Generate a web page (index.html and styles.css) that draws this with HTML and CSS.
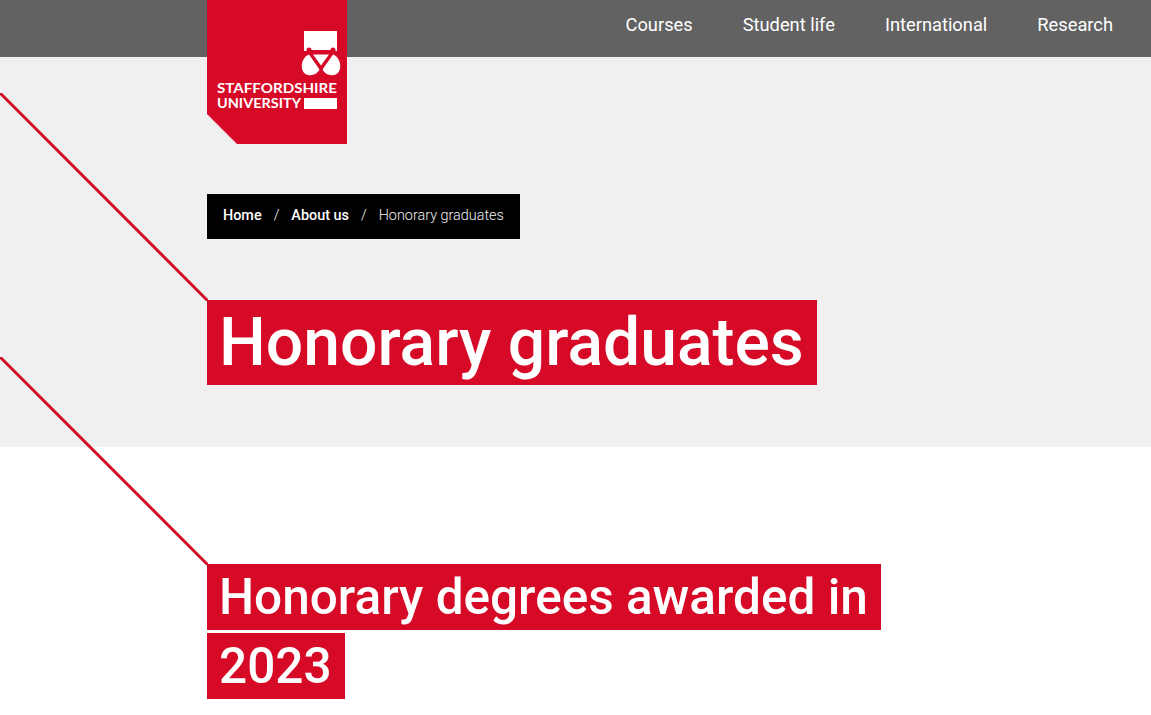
FILE: index.html
```html
<!DOCTYPE html>
<html lang="en">
<head>
<meta charset="utf-8">
<title>Honorary graduates</title>
<link rel="stylesheet" href="styles.css">
</head>
<body>
<header class="topbar">
  <a class="logo" href="#">
    <svg width="140" height="144" viewBox="0 0 140 144">
      <polygon points="0,0 140,0 140,144 30,144 0,114" fill="#d60a27"/>
      <rect x="97" y="31" width="33" height="20" fill="#fff"/>
      <path d="M106 54.500H122L114 65.500Z" fill="#fff"/>
      <path d="M102 54.500C93 58 92 73 101 75C106 76 110.500 73.500 112.500 69.500Z" fill="#fff"/>
      <path d="M126 54.500C135 58 136 73 127 75C122 76 117.500 73.500 115.500 69.500Z" fill="#fff"/>
      <path d="M100 51.500H128" fill="none" stroke="#d60a27" stroke-width="3"/>
      <circle cx="102" cy="50" r="2.500" fill="#d60a27"/>
      <circle cx="126" cy="50" r="2.500" fill="#d60a27"/>
      <text class="logo-text" x="10" y="93" textLength="120" lengthAdjust="spacingAndGlyphs">STAFFORDSHIRE</text>
      <text class="logo-text" x="10" y="108" textLength="84" lengthAdjust="spacingAndGlyphs">UNIVERSITY</text>
      <rect x="97" y="98" width="33" height="11" fill="#fff"/>
    </svg>
  </a>
  <nav class="nav">
    <a href="#">Courses</a>
    <a href="#">Student life</a>
    <a href="#">International</a>
    <a href="#">Research</a>
  </nav>
</header>
<section class="hero">
  <ol class="crumbs">
    <li><a href="#">Home</a></li>
    <li class="sep">/</li>
    <li><a href="#">About us</a></li>
    <li class="sep">/</li>
    <li class="current">Honorary graduates</li>
  </ol>
  <div class="title-wrap">
    <svg class="diag" width="208" height="208" viewBox="0 0 208 208"><line x1="0" y1="0" x2="208" y2="208" stroke="#cf0f2a" stroke-width="3"/></svg>
    <h1 class="title">Honorary graduates</h1>
  </div>
</section>
<main class="content">
  <div class="title-wrap">
    <svg class="diag" width="208" height="208" viewBox="0 0 208 208"><line x1="0" y1="0" x2="208" y2="208" stroke="#cf0f2a" stroke-width="3"/></svg>
    <h2 class="subtitle"><span>Honorary degrees awarded in 2023</span></h2>
  </div>
</main>
</body>
</html>
```
FILE: styles.css
```css
* { box-sizing: border-box; }
html, body { margin: 0; padding: 0; }
body {
  font-family: Roboto, "Liberation Sans", sans-serif;
  background: #fff;
  color: #000;
  overflow: hidden;
  height: 715px;
}
a { color: inherit; text-decoration: none; }
.topbar {
  position: relative;
  height: 57px;
  background: #626262;
  display: flex;
  justify-content: flex-end;
  align-items: flex-start;
  padding-right: 38px;
}
.logo {
  position: absolute;
  left: 207px;
  top: 0;
  width: 140px;
  height: 144px;
  z-index: 2;
}
.logo svg { display: block; }
.logo-text {
  font-family: Lato, sans-serif;
  font-size: 14px;
  font-weight: 700;
  fill: #fff;
}
.nav {
  display: flex;
  gap: 50px;
  color: #fff;
  font-size: 18.3px;
  line-height: 24px;
  padding-top: 13px;
}
.hero {
  background: #f1f0f1;
  height: 390px;
  padding: 137px 0 0 207px;
}
.crumbs {
  list-style: none;
  margin: 0;
  padding: 0 16px 2px;
  height: 45px;
  width: 313px;
  background: #000;
  color: #fff;
  display: flex;
  align-items: center;
  gap: 12px;
  font-size: 14.4px;
  font-weight: 500;
  white-space: nowrap;
}
.crumbs .sep, .crumbs .current { font-weight: 300; }
.crumbs .current { color: #f0f0f0; }
.title-wrap { position: relative; }
.hero .title-wrap { margin-top: 61px; }
.diag {
  position: absolute;
  left: -207px;
  top: -207px;
}
.content .diag { left: 0; top: -206px; }
.title {
  display: inline-block;
  vertical-align: top;
  margin: 0;
  background: #d60a27;
  color: #fff;
  font-size: 66px;
  font-weight: 500;
  line-height: 85px;
  padding: 0 13px 0 12px;
}
.content { padding-top: 116px; }
.subtitle {
  margin: 0 0 0 207px;
  width: 700px;
  font-size: 49.5px;
  font-weight: 500;
  line-height: 69px;
  color: #fff;
}
.subtitle span {
  background: #d60a27;
  padding: 4px 13px 4px 12px;
  -webkit-box-decoration-break: clone;
  box-decoration-break: clone;
}
```
